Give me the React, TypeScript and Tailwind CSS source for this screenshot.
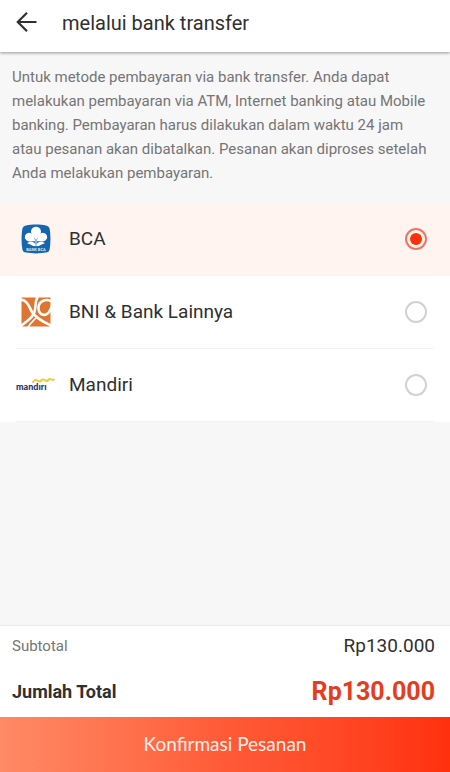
import { useState } from "react";

function BcaLogo() {
  return (
    <svg width="30" height="30" viewBox="0 0 30 30" aria-hidden="true">
      <path
        d="M5 1.4C11 .3 19 .3 25 1.4Q28.200 2 28.700 5C29.700 11 29.700 19 28.700 25Q28.200 28 25 28.600C19 29.700 11 29.700 5 28.600Q1.800 28 1.300 25C.3 19 .3 11 1.300 5Q1.800 2 5 1.400Z"
        fill="#1566b0"
      />
      <g fill="#fff">
        <path d="M15 15.500C11.800 12.500 10 10.200 10 7.400a5 4.600 0 0 1 10 0c0 2.800-1.800 5.100-5 8.100Z" />
        <path d="M14.200 17.300C13.500 12.500 11.500 9 8.200 8.700a4.400 4.300 0 0 0-3.100 7.300c2 1.900 5.400 1.500 9.100 1.300Z" />
        <path d="M15.800 17.300C16.500 12.500 18.500 9 21.800 8.700a4.400 4.300 0 0 1 3.100 7.300c-2 1.900-5.400 1.500-9.100 1.300Z" />
        <path d="M14.500 22.300c.1-2.400-.6-4-3.100-4.400-2.500-.4-4.800.4-5.200 1.700 2.500 0 4 2.800 8.300 2.700Z" />
        <path d="M15.500 22.300c-.1-2.400.6-4 3.100-4.400 2.500-.4 4.800.4 5.200 1.700-2.500 0-4 2.800-8.300 2.700Z" />
      </g>
      <path d="M15 14v8" stroke="#fff" strokeWidth="1" />
      <text
        x="15"
        y="27"
        textAnchor="middle"
        fontSize="4"
        fontWeight="700"
        fill="#d6e6f5"
        fontFamily="Roboto, sans-serif"
      >
        BANK BCA
      </text>
    </svg>
  );
}

function BniLogo() {
  return (
    <svg width="30" height="30" viewBox="0 0 30 30" aria-hidden="true">
      <path d="M.5 .5h29v29H.5z" fill="#e07431" />
      <g fill="none" stroke="#fff">
        <path d="M-1 2.500C7 3 8 10 11 15S20 24 31 29" strokeWidth="2.600" />
        <path d="M17 -1C13 5 16 12 12 18S5 24 -1 30" strokeWidth="2.600" />
        <path d="M7 31C8 27 11 25 15 21" strokeWidth="1.600" />
        <path
          d="M31 4.500C25 1 18 4 17.500 10S21 19 25 17.500 29 13 31 9"
          strokeWidth="2.600"
        />
      </g>
    </svg>
  );
}

function MandiriLogo() {
  return (
    <svg width="40" height="16" viewBox="0 0 40 16" aria-hidden="true">
      <g fill="none" stroke="#f0cb45" strokeWidth="2" strokeLinecap="round">
        <path d="M17 5C18.500 2.500 20 2.500 21.500 3.600S24 4.500 25 3.500" />
        <path d="M24.500 4.500C26 2 27.500 2 29 3.100S31.500 4 32.500 3" />
        <path d="M31.500 4C33 1.500 34 1.500 35.500 2.500S37 3 38 2.500" />
      </g>
      <text
        x="0"
        y="13"
        fontSize="9"
        fontWeight="900"
        fill="#1f3569"
        fontFamily="Lato, sans-serif"
      >
        mandırı
      </text>
    </svg>
  );
}

const banks = [
  { id: "bca", name: "BCA", logo: <BcaLogo /> },
  { id: "bni", name: "BNI & Bank Lainnya", logo: <BniLogo /> },
  { id: "mandiri", name: "Mandiri", logo: <MandiriLogo /> },
];

export default function App() {
  const [selected, setSelected] = useState("bca");

  return (
    <div className="flex min-h-screen flex-col bg-[#f7f7f7] font-[Roboto,sans-serif] text-[#303030]">
      <header className="z-10 flex h-13 items-center gap-6 bg-white px-4 pb-1.5 shadow-[0_1px_3px_rgba(0,0,0,0.4)]">
        <button type="button" aria-label="Kembali">
          <svg
            width="22"
            height="22"
            viewBox="0 0 22 22"
            fill="none"
            stroke="currentColor"
            strokeWidth="2.200"
          >
            <path d="M20.500 10H2M11 .8 1.800 10l9.200 9.200" />
          </svg>
        </button>
        <h1 className="text-[20px] leading-6">melalui bank transfer</h1>
      </header>

      <main className="flex-1">
        <p className="px-3 pt-[13px] pr-4 pb-[18px] text-[15px] leading-6 text-[#757575]">
          Untuk metode pembayaran via bank transfer. Anda dapat melakukan
          pembayaran via ATM, Internet banking atau Mobile banking. Pembayaran
          harus dilakukan dalam waktu 24 jam atau pesanan akan dibatalkan.
          Pesanan akan diproses setelah Anda melakukan pembayaran.
        </p>

        <div role="radiogroup" aria-label="Pilih bank" className="bg-white">
          {banks.map((bank) => (
            <label
              key={bank.id}
              className="block cursor-pointer px-4 has-checked:bg-[#fff4f0]"
            >
              <div className="flex h-[73px] items-center gap-[13px] border-b border-[#f4f2f2] pr-[7px]">
                <span className="flex w-10 justify-center">{bank.logo}</span>
                <span className="flex-1 text-[19px] leading-6">
                  {bank.name}
                </span>
                <input
                  type="radio"
                  name="bank"
                  value={bank.id}
                  checked={selected === bank.id}
                  onChange={() => setSelected(bank.id)}
                  className="grid size-[22px] appearance-none place-items-center rounded-full border-2 border-[#d2d2d2] before:size-3 before:rounded-full checked:border-[#ee7560] checked:before:bg-[#f9320a]"
                />
              </div>
            </label>
          ))}
        </div>
      </main>

      <footer className="border-t border-[#ececec] bg-white">
        <dl className="px-3 pr-[15px]">
          <div className="flex h-10 items-center justify-between">
            <dt className="text-[15px] text-[#757575]">Subtotal</dt>
            <dd className="text-[19px]">Rp130.000</dd>
          </div>
          <div className="flex h-[51px] items-center justify-between">
            <dt className="text-[18px] font-bold">Jumlah Total</dt>
            <dd className="text-[25px] font-bold text-[#e63c1c]">Rp130.000</dd>
          </div>
        </dl>
        <button
          type="button"
          className="h-[55px] w-full bg-linear-to-r from-[#ff8a65] via-[#ff5a36] to-[#ff300c] font-[Lato,sans-serif] text-[19px] text-[#fff0eb]"
        >
          Konfirmasi Pesanan
        </button>
      </footer>
    </div>
  );
}
